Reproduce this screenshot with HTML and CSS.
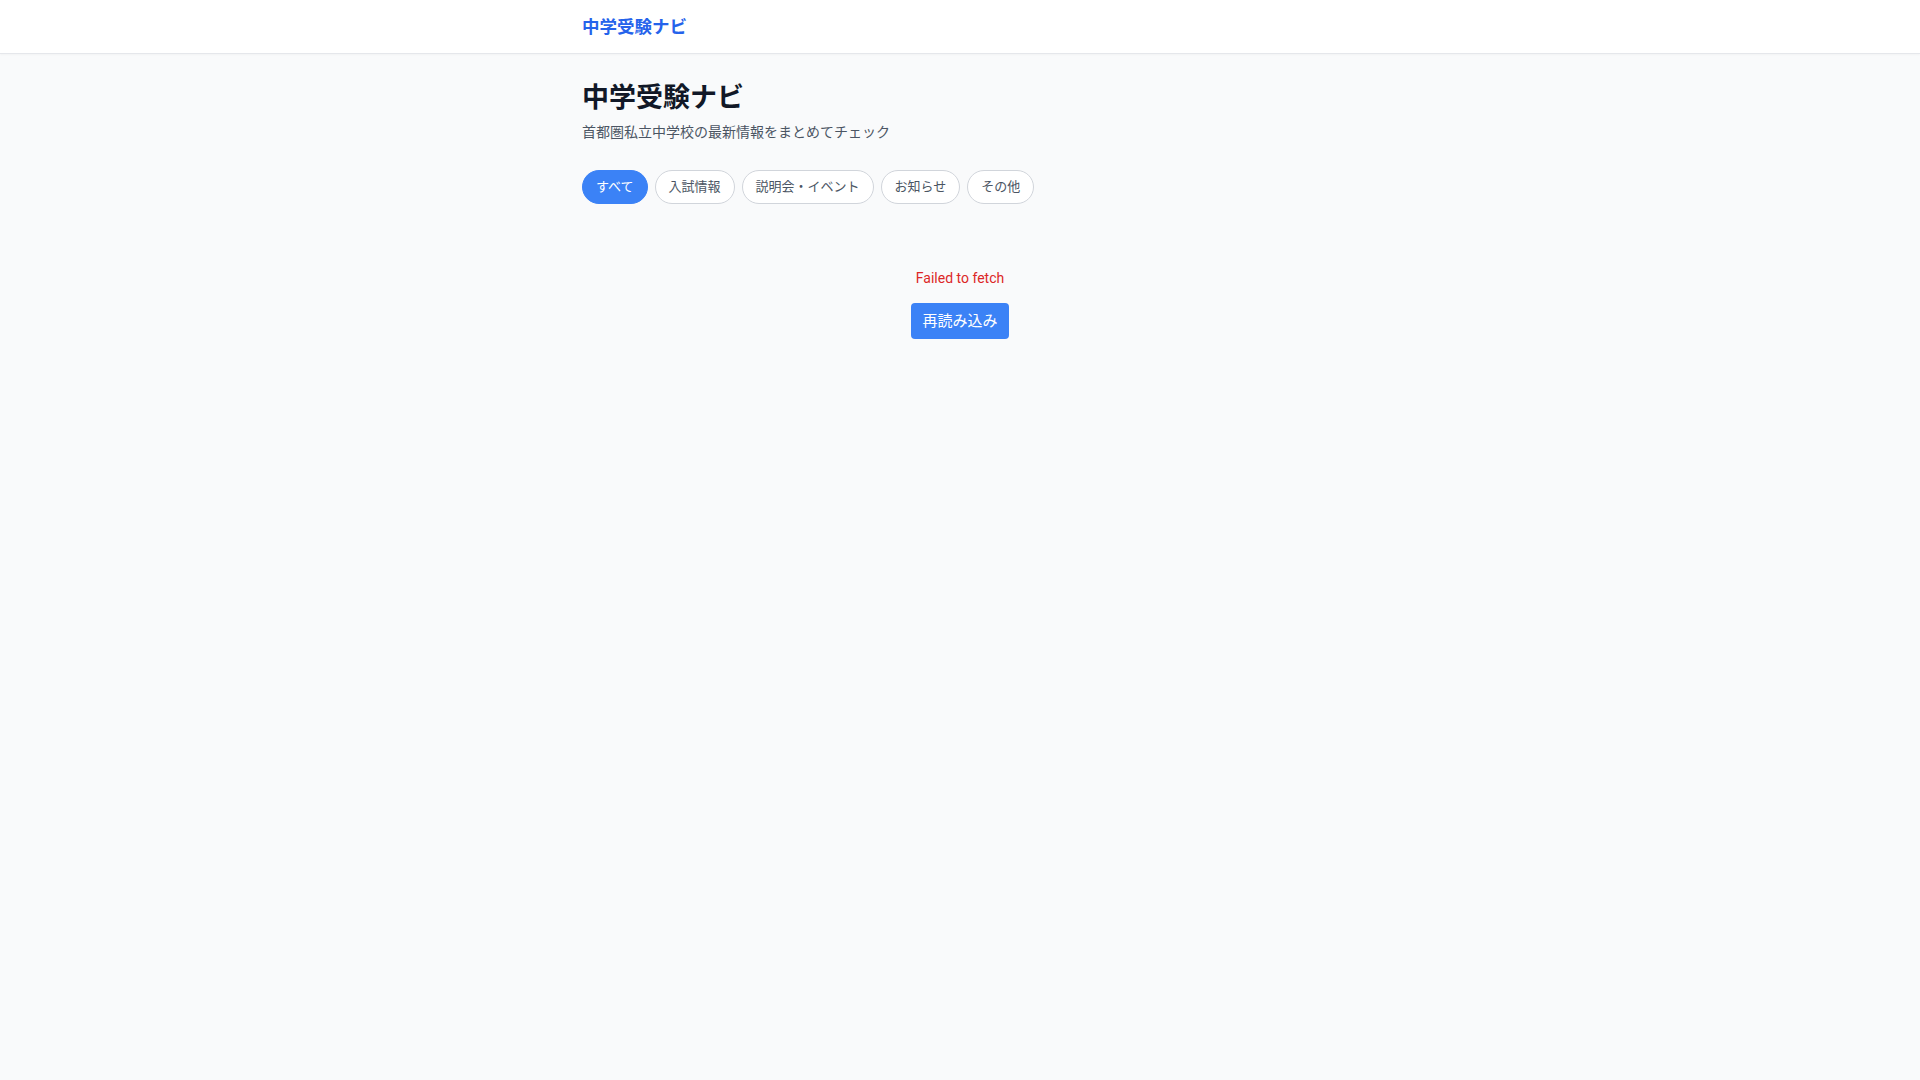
FILE: index.html
```html
<!DOCTYPE html>
<html lang="ja">
<head>
<meta charset="utf-8">
<title>中学受験ナビ</title>
<link rel="stylesheet" href="styles.css">
</head>
<body>
<header class="site-header">
  <div class="container header-inner">
    <a class="logo" href="#">中学受験ナビ</a>
  </div>
</header>
<main class="container main">
  <h1 class="title">中学受験ナビ</h1>
  <p class="subtitle">首都圏私立中学校の最新情報をまとめてチェック</p>
  <nav class="filters">
    <button class="pill active">すべて</button>
    <button class="pill">入試情報</button>
    <button class="pill">説明会・イベント</button>
    <button class="pill">お知らせ</button>
    <button class="pill">その他</button>
  </nav>
  <section class="error-box">
    <p class="error-text">Failed to fetch</p>
    <button class="reload">再読み込み</button>
  </section>
</main>
</body>
</html>
```

FILE: styles.css
```css
* { box-sizing: border-box; }
html, body { margin: 0; padding: 0; }
body {
  background: #f9fafb;
  font-family: "Roboto", "Noto Sans CJK JP", sans-serif;
  color: #111827;
  min-height: 100vh;
}
.container {
  max-width: 756px;
  margin: 0 auto;
}
.site-header {
  background: #ffffff;
  border-bottom: 1px solid #e5e7eb;
  box-shadow: 0 1px 2px rgba(0,0,0,0.03);
}
.header-inner {
  height: 53px;
  display: flex;
  align-items: center;
}
.logo {
  font-size: 17.5px;
  font-weight: 700;
  color: #2563eb;
  text-decoration: none;
  line-height: 24px;
}
.main {
  padding-top: 26px;
}
.title {
  margin: 0;
  font-size: 27px;
  line-height: 36px;
  font-weight: 700;
  color: #111827;
}
.subtitle {
  margin: 6px 0 0;
  font-size: 14px;
  line-height: 20px;
  color: #4b5563;
}
.filters {
  display: flex;
  gap: 7px;
  margin-top: 28px;
}
.pill {
  height: 34px;
  padding: 0 13px;
  border: 1px solid #d1d5db;
  border-radius: 999px;
  background: #ffffff;
  color: #4b5563;
  font-family: inherit;
  font-size: 13px;
  line-height: 32px;
  cursor: pointer;
}
.pill.active {
  background: #3b82f6;
  border-color: #3b82f6;
  color: #ffffff;
}
.error-box {
  display: flex;
  flex-direction: column;
  align-items: center;
  padding-top: 64px;
}
.error-text {
  margin: 0;
  font-size: 14px;
  line-height: 20px;
  color: #dc2626;
}
.reload {
  margin-top: 15px;
  height: 36px;
  padding: 0 11px;
  border: none;
  border-radius: 4px;
  background: #3b82f6;
  color: #ffffff;
  font-family: inherit;
  font-size: 15px;
  line-height: 36px;
  cursor: pointer;
}
```
